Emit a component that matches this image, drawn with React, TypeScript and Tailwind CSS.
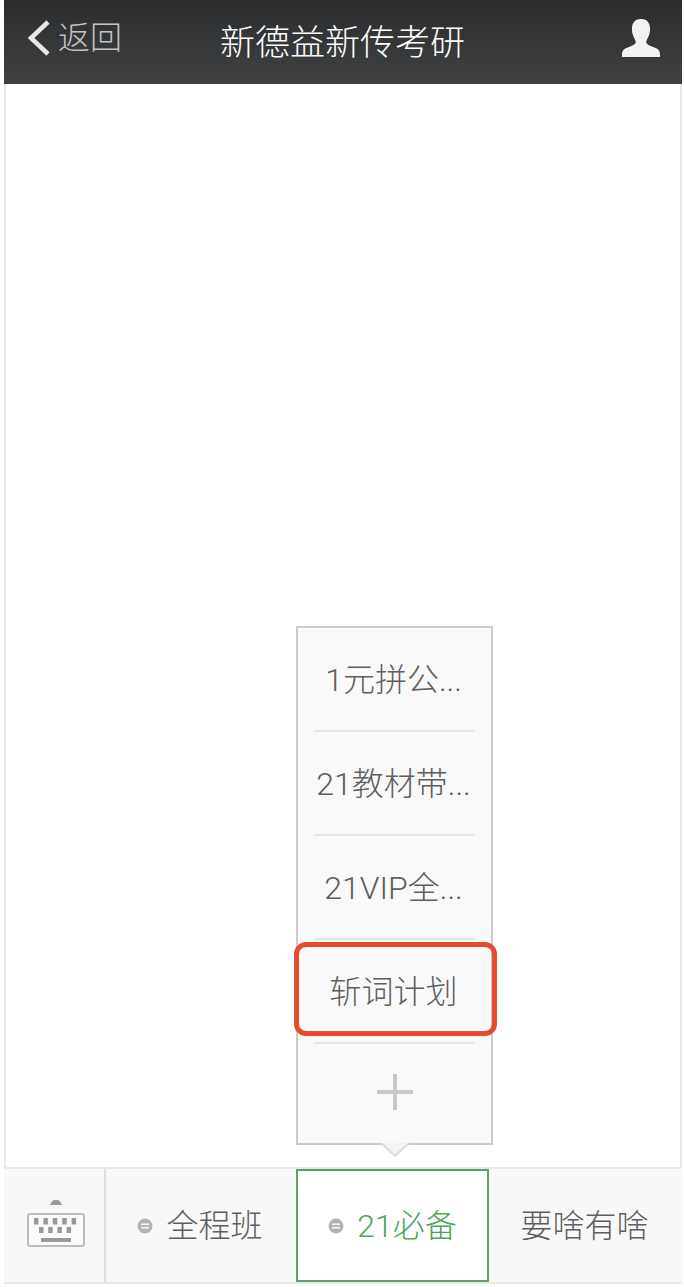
const cjk = "[font-family:'Roboto','Noto_Sans_CJK_SC',sans-serif] font-light";

function MenuRow({ label }: { label: string }) {
  return (
    <div className="flex h-[104px] flex-col">
      <div className="flex flex-1 items-center justify-center whitespace-nowrap pr-[2px] pt-[2px] text-[32px] leading-none text-[#5e5e5e]">
        {label}
      </div>
      <div className="mx-[16px] h-[2px] bg-[#e6e6e6]" />
    </div>
  );
}

function Dot() {
  return (
    <svg width="16" height="16" viewBox="0 0 16 16" className="shrink-0">
      <circle cx="8" cy="8" r="7.5" fill="#b4b4b4" />
      <rect x="4" y="5.5" width="8" height="1.6" fill="#f4f4f4" />
      <rect x="4" y="9" width="8" height="1.6" fill="#f4f4f4" />
    </svg>
  );
}

function Keyboard() {
  const top = [0, 1, 2, 3, 4];
  const mid = [0, 1, 2, 3];
  return (
    <svg width="60" height="52" viewBox="0 0 60 52" className="mb-[6px] ml-[4px]">
      <path d="M24 8 C26 1 34 1 36 8 Z" fill="#999" />
      <rect x="2" y="17" width="56" height="32" rx="2" fill="#fbfbfb" stroke="#bcbcbc" strokeWidth="2" />
      {top.map((i) => (
        <rect key={i} x={8 + i * 9.4} y="21" width="4.500" height="6.500" fill="#999" />
      ))}
      {mid.map((i) => (
        <rect key={i} x={13 + i * 9.2} y="30" width="4.500" height="6" fill="#999" />
      ))}
      <rect x="15" y="41" width="30" height="4" fill="#999" />
    </svg>
  );
}

export default function App() {
  return (
    <div className={`flex h-[1287px] w-[684px] flex-col bg-white pb-[3px] pl-[4px] pr-[2px] ${cjk}`}>
      <div className="flex h-[84px] shrink-0 items-center bg-gradient-to-b from-[#2b2c2e] to-[#3f4143] pl-[22px] pr-[21px]">
        <div className="mb-[8px] flex flex-1 items-center gap-[6px] text-[32px] leading-none text-[#c4c4c4]">
          <svg width="26" height="38" viewBox="0 0 26 38" className="shrink-0">
            <path d="M22 3 L5 19 L22 35" fill="none" stroke="#e8e8e8" strokeWidth="4.500" />
          </svg>
          <span>返回</span>
        </div>
        <div className="mr-[2px] mt-[2px] text-[35px] leading-none text-white">新德益新传考研</div>
        <div className="flex flex-1 justify-end">
          <svg width="40" height="38" viewBox="0 0 42 40" className="mb-[8px]">
            <path
              d="M21 0 C28 0 31 5 30.500 12 C30 18 27 21 26.500 24 C26.500 27 30 28 35 30 C39 31.500 41 33 41 38 L41 40 L1 40 L1 38 C1 33 3 31.500 7 30 C12 28 15.500 27 15.500 24 C15 21 12 18 11.500 12 C11 5 14 0 21 0 Z"
              fill="#f2f2f2"
            />
          </svg>
        </div>
      </div>

      <div className="flex flex-1 flex-col justify-end border-x-2 border-[#e8e8e8] pb-[10px] pl-[290px]">
        <div className="relative w-[197px]">
          <div className="border-2 border-[#cbcbcb] bg-[#f9f9f9]">
            <MenuRow label="1元拼公..." />
            <MenuRow label="21教材带..." />
            <MenuRow label="21VIP全..." />
            <MenuRow label="斩词计划" />
            <div className="flex h-[99px] items-center justify-center pb-[4px]">
              <svg width="36" height="36" viewBox="0 0 36 36">
                <rect x="0" y="16" width="36" height="4" fill="#c8c8c8" />
                <rect x="16" y="0" width="4" height="36" fill="#c8c8c8" />
              </svg>
            </div>
          </div>
          <svg width="28" height="14" viewBox="0 0 28 14" className="mx-auto -mt-[2px] block">
            <path d="M0 0 L14 13 L28 0" fill="#f4f4f4" stroke="#dcdcdc" strokeWidth="2" />
          </svg>
          <div className="absolute left-[-2px] top-[316px] h-[94px] w-[203px] rounded-[12px] border-[5px] border-[#e34c2c]" />
        </div>
      </div>

      <div className="flex h-[117px] shrink-0 border-y-2 border-[#e8e8e8] bg-[#f8f8f8] text-[32px] leading-none text-[#5e5e5e]">
        <div className="flex w-[102px] shrink-0 items-center justify-center border-r-2 border-[#dedede]">
          <Keyboard />
        </div>
        <div className="flex w-[190px] shrink-0 items-center justify-center gap-[13px] pr-[2px]">
          <Dot />
          <span>全程班</span>
        </div>
        <div className="flex w-[193px] shrink-0 items-center justify-center gap-[13px] border-2 border-[#5f9f68] bg-white text-[#4fa65a]">
          <Dot />
          <span>21必备</span>
        </div>
        <div className="flex flex-1 items-center justify-center pr-[2px]">
          <span>要啥有啥</span>
        </div>
      </div>
    </div>
  );
}
